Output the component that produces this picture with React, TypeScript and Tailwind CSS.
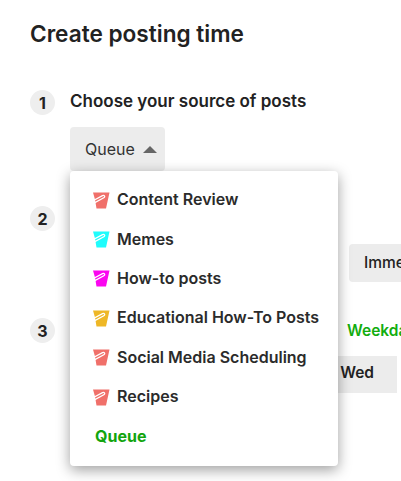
const sources = [
  { name: 'Content Review', color: '#f0706a' },
  { name: 'Memes', color: '#1ffcfc' },
  { name: 'How-to posts', color: '#fb06f0' },
  { name: 'Educational How-To Posts', color: '#eeb726' },
  { name: 'Social Media Scheduling', color: '#f0706a' },
  { name: 'Recipes', color: '#f0706a' },
]

const StepNumber = ({ n }: { n: number }) => (
  <div className="w-[25px] h-[25px] shrink-0 rounded-full bg-[#eeeeee] flex items-center justify-center text-[16px] font-bold text-[#222]">
    {n}
  </div>
)

const BucketIcon = ({ color }: { color: string }) => (
  <svg width="18" height="17" viewBox="0 0 18 17" className="shrink-0 mt-[2px]">
    <path d="M1 0.5H17.5L14 16.5H4.5L3 7.5Z" fill={color} />
    <path
      d="M0.5 9L10.5 3.6C12.4 2.7 13.6 4.8 11.8 5.8L1 11.6"
      fill="none"
      stroke="#fff"
      strokeWidth="1.3"
    />
  </svg>
)

export default function App() {
  return (
    <div className="relative w-[401px] h-[481px] overflow-hidden bg-white font-['Inter',sans-serif] text-[#222]">
      <div className="pl-[30px] pt-[20px]">
        <h1 className="text-[22.6px] leading-[28px] font-semibold">Create posting time</h1>

        <div className="flex gap-[15px] mt-[42px]">
          <StepNumber n={1} />
          <div>
            <div className="text-[17px] leading-[22px] font-semibold">Choose your source of posts</div>
            <button className="mt-[15px] w-[95px] h-[44px] rounded bg-[#ececec] flex items-center pl-[15px] gap-[8px] text-[16px] text-[#333]">
              Queue
              <span className="w-0 h-0 border-x-[7px] border-x-transparent border-b-[7px] border-b-[#666]" />
            </button>
          </div>
        </div>

        <div className="flex mt-[35px]">
          <StepNumber n={2} />
          <div className="ml-[294px] mt-[38px] w-[80px] h-[38px] shrink-0 rounded-l bg-[#ececec] pl-[15px] flex items-center text-[15.5px] font-medium">
            Immediately
          </div>
        </div>

        <div className="flex mt-[36px]">
          <StepNumber n={3} />
          <div className="ml-[292px] shrink-0 w-[80px]">
            <div className="mt-[3px] text-[15.5px] leading-[20px] font-semibold text-[#12ad0e] whitespace-nowrap">Weekdays</div>
          </div>
        </div>

        <div className="ml-[270px] mt-[13px] flex h-[37px]">
          <div className="w-[97px] bg-[#ececec] flex items-center justify-end pr-[23px] pb-[3px] text-[15.5px] font-semibold">Wed</div>
          <div className="w-[4px] bg-white" />
          <div className="flex-1 bg-[#ececec]" />
        </div>
      </div>

      <div className="absolute left-[70px] top-[171px] w-[268px] h-[295px] rounded bg-white shadow-[0_4px_14px_rgba(0,0,0,0.38)] pt-[8.5px] pl-[22px]">
        {sources.map((s) => (
          <div key={s.name} className="h-[39.4px] flex items-center gap-[7px] text-[16px] font-semibold text-[#2b2b2b] whitespace-nowrap">
            <BucketIcon color={s.color} />
            {s.name}
          </div>
        ))}
        <div className="h-[39.4px] flex items-center pl-[3px] text-[16px] font-bold text-[#12a50e]">Queue</div>
      </div>
    </div>
  )
}
